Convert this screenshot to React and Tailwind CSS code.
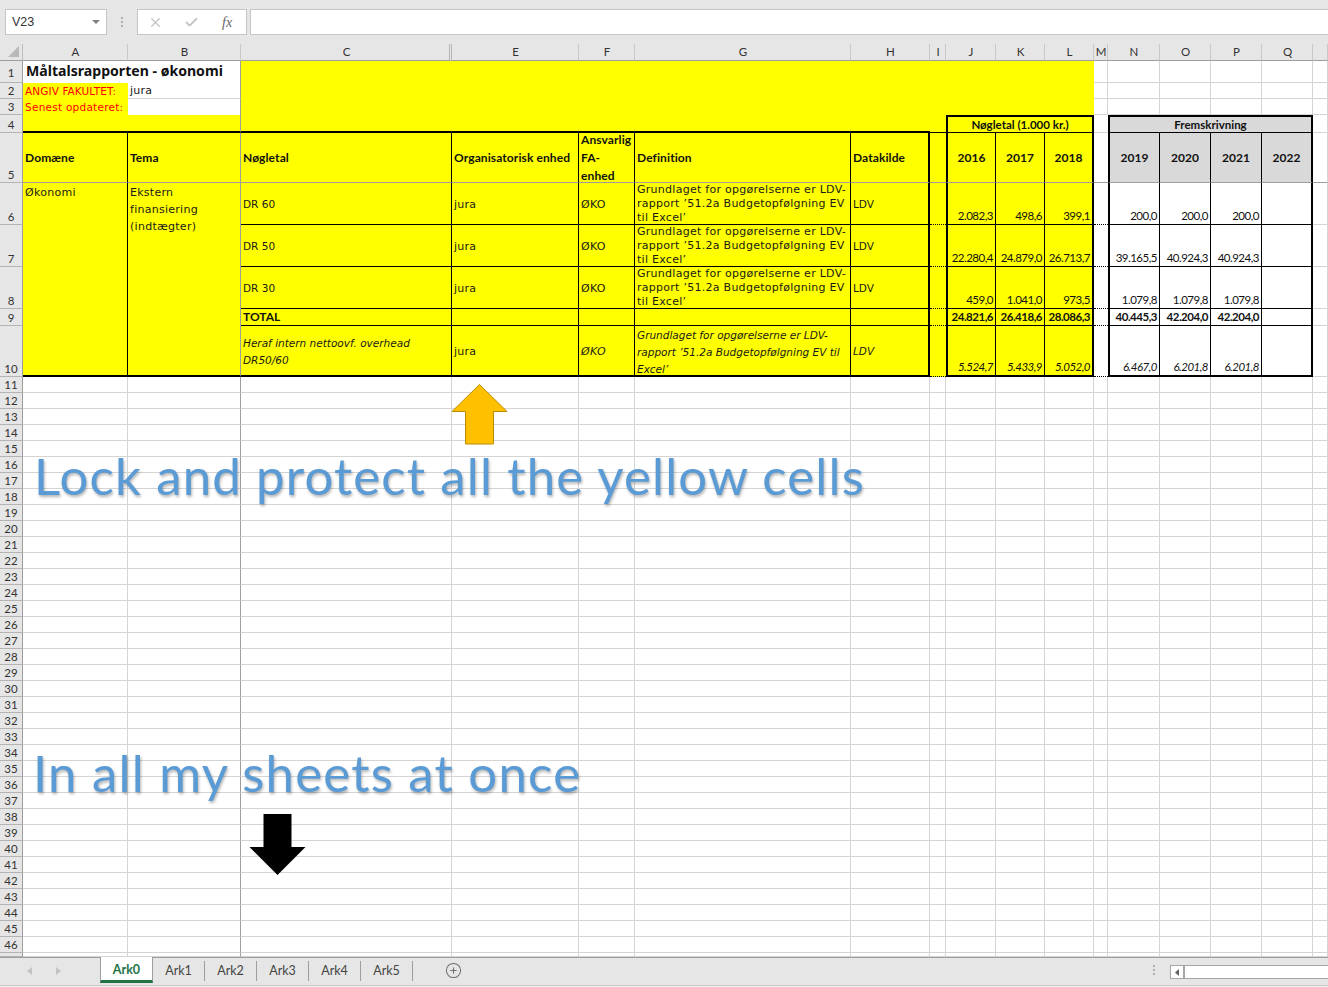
import React from 'react';
import { X, Check, CirclePlus } from 'lucide-react';

const letters = ['A', 'B', 'C', 'E', 'F', 'G', 'H', 'I', 'J', 'K', 'L', 'M', 'N', 'O', 'P', 'Q', ''];

const dataRows = [
  { n: 6, label: 'DR 60', actual: ['2.082,3', '498,6', '399,1'], forecast: ['200,0', '200,0', '200,0'] },
  { n: 7, label: 'DR 50', actual: ['22.280,4', '24.879,0', '26.713,7'], forecast: ['39.165,5', '40.924,3', '40.924,3'] },
  { n: 8, label: 'DR 30', actual: ['459,0', '1.041,0', '973,5'], forecast: ['1.079,8', '1.079,8', '1.079,8'] },
];

const blankRows = Array.from({ length: 36 }, (_, i) => i + 11);
const blankCols = letters.map((l, i) => i);

const yellow = 'bg-[#ffff00]';
const dejavu = "font-['DejaVu_Sans',sans-serif] text-[11px] tracking-[0.27px] text-[#1a1a1a]";
const lato = "font-['Lato',sans-serif] text-[#111]";
const small = 'text-[10.5px] tracking-normal';

function RowHead({ n, className = '' }) {
  return (
    <div className={`flex items-end justify-center overflow-hidden border-r border-b border-r-[#9e9e9e] border-b-[#b4b4b4] bg-[#e6e6e6] font-['Lato',sans-serif] text-[11.5px] leading-[15px] text-[#333] ${className}`}>
      {n}
    </div>
  );
}

function Blank() {
  return <div className="border-r border-b border-[#d4d4d4] bg-white" />;
}

function BlankB() {
  return <div className="border-r border-b border-r-[#9e9e9e] border-b-[#d4d4d4] bg-white" />;
}

function HeaderCell({ children, edge = 'border-r border-r-black' }) {
  return (
    <div className={`flex items-center border-b border-b-[#9e9e9e] px-[2px] text-[12px] font-bold leading-[18px] tracking-[0.1px] ${edge} ${yellow} ${lato}`}>
      <span>{children}</span>
    </div>
  );
}

function BodyCell({ children, className = '', textClass = '' }) {
  return (
    <div className={`flex items-center border-r border-b border-black px-[2px] ${yellow} ${dejavu} ${className}`}>
      <span className={textClass}>{children}</span>
    </div>
  );
}

function NumCell({ children, className = '' }) {
  return (
    <div className={`flex items-end justify-end overflow-hidden border-r border-b border-black pr-[2px] pb-[1px] text-[11.5px] leading-[14px] tracking-[-0.5px] whitespace-nowrap ${lato} ${className}`}>
      {children}
    </div>
  );
}

export default function App() {
  return (
    <div className="relative h-[987px] w-[1328px] overflow-hidden bg-[#e6e6e6]">
      {/* formula bar */}
      <div className="flex h-[44px] items-start pt-[9px]">
        <div className="ml-[5px] flex h-[26px] w-[102px] items-center justify-between border border-[#c6c6c6] bg-white pr-[6px] pl-[6px] font-['Liberation_Sans',sans-serif] text-[12.5px] text-[#333]">
          <span>V23</span>
          <svg width="8" height="4" viewBox="0 0 8 4"><path d="M0 0h8L4 4z" fill="#808080" /></svg>
        </div>
        <div className="ml-[13px] flex h-[26px] w-[4px] flex-col items-center justify-center gap-[2px]">
          <i className="h-[2px] w-[2px] bg-[#b0b0b0]" />
          <i className="h-[2px] w-[2px] bg-[#b0b0b0]" />
          <i className="h-[2px] w-[2px] bg-[#b0b0b0]" />
        </div>
        <div className="ml-[13px] flex h-[26px] w-[110px] items-center border border-[#c6c6c6] bg-white">
          <X className="ml-[10px] h-[15px] w-[15px] text-[#c4c4c4]" strokeWidth={2.2} />
          <Check className="ml-[21px] h-[15px] w-[15px] text-[#c4c4c4]" strokeWidth={3} />
          <span className="ml-[23px] font-['Liberation_Serif',serif] text-[14px] text-[#666] italic">fx</span>
        </div>
        <div className="ml-[3px] h-[26px] flex-1 border border-r-0 border-[#c6c6c6] bg-white" />
      </div>

      {/* sheet */}
      <div className="relative h-[913px] overflow-hidden">
        <div className="grid grid-cols-[23px_105px_113px_211px_127px_56px_216px_79px_16px_50px_49px_49px_14px_52px_51px_51px_51px_15px] grid-rows-[17px_22px_16px_16px_18px_50px_42px_42px_42px_17px_51px_repeat(36,16px)_4px]">
          {/* column headers */}
          <div className="flex items-end justify-end border-r border-b border-r-[#bdbdbd] border-b-[#9e9e9e] bg-[#e6e6e6] pr-[3px] pb-[3px]">
            <svg width="11" height="11" viewBox="0 0 11 11"><path d="M11 0v11H0z" fill="#b8b8b8" /></svg>
          </div>
          {letters.map((l) => (
            <div
              key={l || 'R'}
              className={`flex items-center justify-center border-b border-b-[#9e9e9e] bg-[#e6e6e6] font-['Lato',sans-serif] text-[11.5px] text-[#333] ${l === 'C' ? 'border-r-[3px] border-double border-r-[#b4b4b4] pl-[3px]' : 'border-r border-r-[#c8c8c8] pl-[1px]'}`}
            >
              {l}
            </div>
          ))}

          {/* rows 1-3 */}
          <RowHead n={1} className="pb-[2px]" />
          <div className="col-span-2 flex items-center border-r border-r-[#9e9e9e] bg-white pb-[3px] pl-[3px] font-['Noto_Sans',sans-serif] text-[14.1px] font-bold whitespace-nowrap text-[#111]">
            Måltalsrapporten - økonomi
          </div>
          <div className={`col-span-9 row-span-3 ${yellow}`} />
          <Blank /><Blank /><Blank /><Blank /><Blank /><Blank />

          <RowHead n={2} />
          <div className={`flex items-center pt-[1px] pl-[2px] font-['DejaVu_Sans',sans-serif] text-[10.5px] tracking-[0.1px] whitespace-nowrap text-[#ff0000] ${yellow}`}>ANGIV FAKULTET:</div>
          <div className={`flex items-center border-r border-b border-r-[#9e9e9e] border-b-[#d4d4d4] bg-white pt-[1px] pl-[2px] ${dejavu}`}>jura</div>
          <Blank /><Blank /><Blank /><Blank /><Blank /><Blank />

          <RowHead n={3} />
          <div className={`flex items-center pt-[1px] pl-[2px] font-['DejaVu_Sans',sans-serif] text-[10.5px] tracking-[0.25px] whitespace-nowrap text-[#ff0000] ${yellow}`}>Senest opdateret:</div>
          <div className="border-r border-r-[#9e9e9e] bg-white" />
          <Blank /><Blank /><Blank /><Blank /><Blank /><Blank />

          {/* row 4 */}
          <RowHead n={4} />
          <div className={`col-span-2 border-r border-b-2 border-r-[#9e9e9e] border-b-black ${yellow}`} />
          <div className={`col-span-5 border-b-2 border-black ${yellow}`} />
          <div className={`border-b border-black ${yellow}`} />
          <div className={`col-span-3 flex items-center justify-center border-x-2 border-t-2 border-b border-black text-[11.5px] font-bold ${yellow} ${lato}`}>Nøgletal (1.000 kr.)</div>
          <div className="border-b border-[#d4d4d4] bg-white" />
          <div className={`col-span-4 flex items-center justify-center border-x-2 border-t-2 border-b border-black bg-[#d9d9d9] text-[11.5px] font-bold ${lato}`}>Fremskrivning</div>
          <Blank />

          {/* row 5 */}
          <RowHead n={5} />
          <HeaderCell>Domæne</HeaderCell>
          <HeaderCell edge="border-r border-r-[#9e9e9e]">Tema</HeaderCell>
          <HeaderCell>Nøgletal</HeaderCell>
          <HeaderCell>Organisatorisk enhed</HeaderCell>
          <HeaderCell>Ansvarlig<br />FA-<br />enhed</HeaderCell>
          <HeaderCell>Definition</HeaderCell>
          <HeaderCell edge="border-r-2 border-r-black">Datakilde</HeaderCell>
          <div className={`border-b border-b-[#9e9e9e] ${yellow}`} />
          {['2016', '2017', '2018'].map((y, i) => (
            <div key={y} className={`flex items-center justify-center border-b border-b-[#9e9e9e] text-[12px] font-bold ${yellow} ${lato} ${i === 0 ? 'border-r border-l-2 border-x-black' : i === 2 ? 'border-r-2 border-r-black' : 'border-r border-r-black'}`}>{y}</div>
          ))}
          <div className="border-b border-b-[#9e9e9e] bg-white" />
          {['2019', '2020', '2021', '2022'].map((y, i) => (
            <div key={y} className={`flex items-center justify-center border-b border-b-[#9e9e9e] bg-[#d9d9d9] text-[12px] font-bold ${lato} ${i === 0 ? 'border-r border-l-2 border-x-black' : i === 3 ? 'border-r-2 border-r-black' : 'border-r border-r-black'}`}>{y}</div>
          ))}
          <div className="border-r border-b border-r-[#d4d4d4] border-b-[#9e9e9e] bg-white" />

          {/* rows 6-8 */}
          {dataRows.map((r, idx) => (
            <React.Fragment key={r.n}>
              <RowHead n={r.n} />
              {idx === 0 && (
                <>
                  <div className={`row-span-5 border-r border-b-2 border-r-black border-b-black pt-[1px] pl-[2px] leading-[17px] ${yellow} ${dejavu}`}>Økonomi</div>
                  <div className={`row-span-5 border-r border-b-2 border-r-[#9e9e9e] border-b-black pt-[1px] pl-[2px] leading-[17px] ${yellow} ${dejavu}`}>
                    Ekstern<br />finansiering<br />(indtægter)
                  </div>
                </>
              )}
              <BodyCell className="pt-[3px]" textClass={small}>{r.label}</BodyCell>
              <BodyCell className="pt-[3px]">jura</BodyCell>
              <BodyCell className="pt-[3px]">ØKO</BodyCell>
              <BodyCell className="leading-[14px]">Grundlaget for opgørelserne er LDV-rapport ’51.2a Budgetopfølgning EV til Excel’</BodyCell>
              <BodyCell className="border-r-2 pt-[3px]" textClass={small}>LDV</BodyCell>
              <div className={`border-b border-dotted border-black ${yellow}`} />
              {r.actual.map((v, i) => (
                <NumCell key={i} className={`${yellow} ${i === 0 ? 'border-l-2' : ''} ${i === 2 ? 'border-r-2' : ''}`}>{v}</NumCell>
              ))}
              <div className="border-b border-dotted border-black bg-white" />
              {r.forecast.map((v, i) => (
                <NumCell key={i} className={`bg-white ${i === 0 ? 'border-l-2' : ''}`}>{v}</NumCell>
              ))}
              <NumCell className="border-r-2 bg-white" />
              <div className="border-r border-b border-[#d4d4d4] bg-white" />
            </React.Fragment>
          ))}

          {/* row 9 */}
          <RowHead n={9} />
          <div className={`flex items-center border-r border-b border-black px-[2px] text-[12px] font-bold ${yellow} ${lato}`}>TOTAL</div>
          <BodyCell /><BodyCell /><BodyCell />
          <BodyCell className="border-r-2" />
          <div className={`border-b border-dotted border-black ${yellow}`} />
          <NumCell className={`border-l-2 font-bold ${yellow}`}>24.821,6</NumCell>
          <NumCell className={`font-bold ${yellow}`}>26.418,6</NumCell>
          <NumCell className={`border-r-2 font-bold ${yellow}`}>28.086,3</NumCell>
          <div className="border-b border-dotted border-black bg-white" />
          <NumCell className="border-l-2 bg-white font-bold">40.445,3</NumCell>
          <NumCell className="bg-white font-bold">42.204,0</NumCell>
          <NumCell className="bg-white font-bold">42.204,0</NumCell>
          <NumCell className="border-r-2 bg-white" />
          <div className="border-r border-b border-[#d4d4d4] bg-white" />

          {/* row 10 */}
          <RowHead n={10} />
          <BodyCell className="border-b-2 pt-[2px] leading-[17px] italic" textClass={small}>Heraf intern nettoovf. overhead DR50/60</BodyCell>
          <BodyCell className="border-b-2 pt-[3px]">jura</BodyCell>
          <BodyCell className="border-b-2 pt-[3px] italic">ØKO</BodyCell>
          <BodyCell className="border-b-2 pt-[3px] leading-[17px] italic" textClass={small}>Grundlaget for opgørelserne er LDV-rapport ’51.2a Budgetopfølgning EV til Excel’</BodyCell>
          <BodyCell className="border-r-2 border-b-2 pt-[3px] italic" textClass={small}>LDV</BodyCell>
          <div className={`border-b border-dotted border-black ${yellow}`} />
          <NumCell className={`border-b-2 border-l-2 italic ${yellow}`}>5.524,7</NumCell>
          <NumCell className={`border-b-2 italic ${yellow}`}>5.433,9</NumCell>
          <NumCell className={`border-r-2 border-b-2 italic ${yellow}`}>5.052,0</NumCell>
          <div className="border-b border-dotted border-black bg-white" />
          <NumCell className="border-b-2 border-l-2 bg-white italic">6.467,0</NumCell>
          <NumCell className="border-b-2 bg-white italic">6.201,8</NumCell>
          <NumCell className="border-b-2 bg-white italic">6.201,8</NumCell>
          <NumCell className="border-r-2 border-b-2 bg-white" />
          <div className="border-r border-b border-[#d4d4d4] bg-white" />

          {/* empty rows */}
          {blankRows.map((n) => (
            <React.Fragment key={n}>
              <RowHead n={n} />
              {blankCols.map((c) => (c === 1 ? <BlankB key={c} /> : <Blank key={c} />))}
            </React.Fragment>
          ))}
          <RowHead />
          {blankCols.map((c) => (c === 1 ? <BlankB key={c} /> : <Blank key={c} />))}
        </div>

        {/* shapes on top of the sheet */}
        <svg className="absolute top-[336px] left-[448px]" width="64" height="68" viewBox="0 0 64 68">
          <path d="M31.5 4.5 59 31.5H45.5V64H17.5V31.5H4z" fill="#ffc000" stroke="#bc8c00" />
        </svg>
        <svg className="absolute top-[768px] left-[248px]" width="60" height="66" viewBox="0 0 60 66">
          <path d="M15.5 2H43.5V35H57.5L29.5 63 1.5 35H15.5z" fill="#000" />
        </svg>
        <div className="absolute top-[397px] left-[34px] font-['Lato',sans-serif] text-[51px] leading-[70px] tracking-[1.12px] whitespace-nowrap text-[#5b9bd5] [text-shadow:1px_2px_3px_rgba(0,0,0,0.3)]">
          Lock and protect all the yellow cells
        </div>
        <div className="absolute top-[694px] left-[33px] font-['Lato',sans-serif] text-[51px] leading-[70px] tracking-[1.2px] whitespace-nowrap text-[#5b9bd5] [text-shadow:1px_2px_3px_rgba(0,0,0,0.3)]">
          In all my sheets at once
        </div>
      </div>

      {/* sheet tabs */}
      <div className="flex h-[29px] items-start border-t border-b border-t-[#9e9e9e] border-b-[#c8c8c8] bg-[#e6e6e6]">
        <div className="flex h-full w-[100px] items-center pb-[2px] pl-[27px]">
          <svg width="5" height="8" viewBox="0 0 5 8"><path d="M5 0v8L0 4z" fill="#c4c4c4" /></svg>
          <svg className="ml-[24px]" width="5" height="8" viewBox="0 0 5 8"><path d="M0 0v8l5-4z" fill="#c4c4c4" /></svg>
        </div>
        <div className="-mt-px flex h-[26px] w-[53px] items-center justify-center border-x border-b-[3px] border-x-[#9e9e9e] border-b-[#217346] bg-white pt-[3px] font-['Lato',sans-serif] text-[12.5px] font-bold text-[#217346]">
          Ark0
        </div>
        {['Ark1', 'Ark2', 'Ark3', 'Ark4', 'Ark5'].map((t) => (
          <div key={t} className="mt-[3px] flex h-[20px] w-[52px] items-center justify-center border-r border-r-[#9e9e9e] font-['Lato',sans-serif] text-[12.5px] text-[#444]">
            {t}
          </div>
        ))}
        <CirclePlus className="mt-[4px] ml-[32px] h-[17px] w-[17px] text-[#707070]" strokeWidth={1.5} />
        <div className="mt-[7px] ml-[691px] flex h-[10px] w-[2px] flex-col justify-between">
          <i className="h-[2px] w-[2px] bg-[#b0b0b0]" />
          <i className="h-[2px] w-[2px] bg-[#b0b0b0]" />
          <i className="h-[2px] w-[2px] bg-[#b0b0b0]" />
        </div>
        <div className="mt-[7px] ml-[15px] flex h-[14px] flex-1 border-y border-l border-[#a6a6a6] bg-white">
          <div className="flex w-[14px] items-center justify-center border-r-2 border-[#a6a6a6]">
            <svg width="4" height="7" viewBox="0 0 4 7"><path d="M4 0v7L0 3.5z" fill="#606060" /></svg>
          </div>
        </div>
      </div>
      <div className="h-[1px] bg-[#f0f0f0]" />
    </div>
  );
}
